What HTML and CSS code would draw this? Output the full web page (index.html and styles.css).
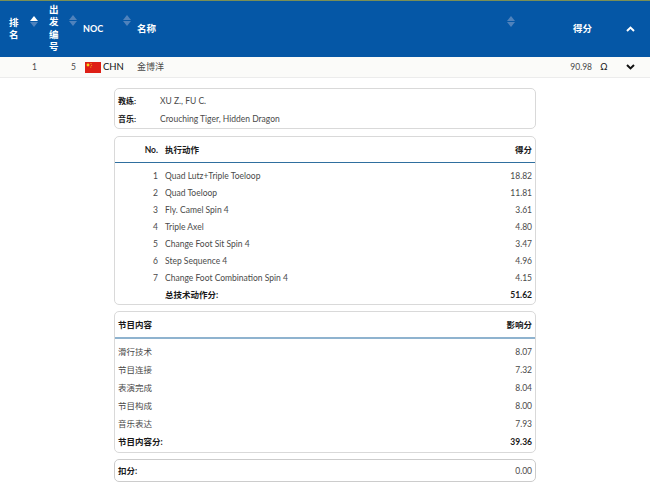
FILE: index.html
```html
<!DOCTYPE html>
<html lang="zh">
<head>
<meta charset="utf-8">
<title>Results</title>
<link rel="stylesheet" href="styles.css">
</head>
<body>
<div class="head">
  <div class="hc c-rank"><span class="hl">排名</span><span class="sort up"></span></div>
  <div class="hc c-start"><span class="hl">出发编号</span><span class="sort"></span></div>
  <div class="hc c-noc"><span class="hl latin">NOC</span><span class="sort"></span></div>
  <div class="hc c-name"><span class="hl">名称</span><span class="sort"></span></div>
  <div class="hc c-score"><span class="hl">得分</span></div>
  <div class="hc c-tog"><svg class="chev" width="9" height="6" viewBox="0 0 9 6"><path d="M1 5 L4.5 1.6 L8 5" fill="none" stroke="#fff" stroke-width="2"/></svg></div>
</div>
<div class="row">
  <div class="c-rank num">1</div>
  <div class="c-start num">5</div>
  <div class="c-noc noc">
    <svg class="flag" width="16" height="11" viewBox="0 0 16 11"><rect width="16" height="11" fill="#de1f16"/><circle cx="3" cy="3" r="1.4" fill="#f7d51d"/><circle cx="6" cy="1.6" r=".5" fill="#f7d51d"/><circle cx="6.6" cy="3.2" r=".5" fill="#f7d51d"/><circle cx="5.8" cy="5" r=".5" fill="#f7d51d"/></svg>
    <span>CHN</span>
  </div>
  <div class="c-name">金博洋</div>
  <div class="c-score val">90.98</div>
  <div class="c-q">Ω</div>
  <div class="c-tog"><svg class="chev" width="9" height="6" viewBox="0 0 9 6"><path d="M1 1 L4.5 4.4 L8 1" fill="none" stroke="#111" stroke-width="2"/></svg></div>
</div>
<main class="detail">
  <section class="panel info">
    <div class="info-row"><b>教练:</b><span>XU Z., FU C.</span></div>
    <div class="info-row"><b>音乐:</b><span>Crouching Tiger, Hidden Dragon</span></div>
  </section>
  <section class="panel tech">
    <div class="ph tech-grid"><b class="r">No.</b><b>执行动作</b><b class="r">得分</b></div>
    <div class="tbody">
      <div class="tech-grid line"><span class="r">1</span><span>Quad Lutz+Triple Toeloop</span><span class="r">18.82</span></div>
      <div class="tech-grid line"><span class="r">2</span><span>Quad Toeloop</span><span class="r">11.81</span></div>
      <div class="tech-grid line"><span class="r">3</span><span>Fly. Camel Spin 4</span><span class="r">3.61</span></div>
      <div class="tech-grid line"><span class="r">4</span><span>Triple Axel</span><span class="r">4.80</span></div>
      <div class="tech-grid line"><span class="r">5</span><span>Change Foot Sit Spin 4</span><span class="r">3.47</span></div>
      <div class="tech-grid line"><span class="r">6</span><span>Step Sequence 4</span><span class="r">4.96</span></div>
      <div class="tech-grid line"><span class="r">7</span><span>Change Foot Combination Spin 4</span><span class="r">4.15</span></div>
      <div class="tech-grid line"><span></span><b>总技术动作分:</b><b class="r">51.62</b></div>
    </div>
  </section>
  <section class="panel pcs">
    <div class="ph split"><b>节目内容</b><b>影响分</b></div>
    <div class="tbody">
      <div class="split pline"><span>滑行技术</span><span>8.07</span></div>
      <div class="split pline"><span>节目连接</span><span>7.32</span></div>
      <div class="split pline"><span>表演完成</span><span>8.04</span></div>
      <div class="split pline"><span>节目构成</span><span>8.00</span></div>
      <div class="split pline"><span>音乐表达</span><span>7.93</span></div>
      <div class="split pline"><b>节目内容分:</b><b>39.36</b></div>
    </div>
  </section>
  <section class="panel ded split"><b>扣分:</b><span>0.00</span></section>
</main>
</body>
</html>
```
FILE: styles.css
```css
* { box-sizing: border-box; }
html, body { margin: 0; padding: 0; }
body {
  background: #fff;
  color: #4a4a4a;
  font: 8.5px/12px Lato, "Noto Sans CJK SC", sans-serif;
  height: 492px;
  overflow: hidden;
}
b { color: #1a1a1a; font-weight: 700; }

.head, .row { display: grid; align-items: center; }
.head {
  grid-template-columns: 40px 41px 51px 414px 46px 58px;
  height: 57px;
  background: #0557a6;
  border-top: 1px solid #7a8f55;
  color: #fff;
  font-weight: 700;
  font-size: 9.5px;
}
.hc { display: flex; align-items: center; height: 100%; }
.hl { display: block; line-height: 12.5px; }
.c-rank.hc { padding-left: 9px; }
.c-rank.hc .hl { width: 10px; }
.c-rank.hc .sort { margin-left: 11px; margin-top: -16px; }
.c-start.hc { padding-left: 9px; }
.c-start.hc .hl { width: 10px; margin-top: -1px; }
.c-start.hc .sort { margin-left: 10px; margin-top: -17px; }
.c-noc.hc { padding-left: 2px; }
.latin { font-size: 9px; }
.c-noc.hc .sort { margin-left: 20px; margin-top: -17px; }
.c-name.hc { padding-left: 5px; }
.c-name.hc .sort { margin-left: 351px; margin-top: -16px; }
.c-score.hc { justify-content: flex-end; }
.c-tog { display: flex; justify-content: flex-end; align-items: center; padding-right: 15px; }

.sort { position: relative; display: block; width: 8px; height: 11px; flex: none; }
.sort::before, .sort::after {
  content: "";
  position: absolute;
  left: 0;
  border-left: 4px solid transparent;
  border-right: 4px solid transparent;
}
.sort::before { top: 0; border-bottom: 5px solid #4f82bc; }
.sort::after { bottom: 0; border-top: 5px solid #4f82bc; }
.sort.up::before { border-bottom-color: #fff; }

.row {
  grid-template-columns: 37px 39px 56px 414px 46px 24px 34px;
  height: 21px;
  background: #fbfbf9;
  border-bottom: 1px solid #ececec;
}
.num { text-align: right; }
.noc { display: flex; align-items: center; color: #111; padding-left: 9px; font-size: 9.5px; gap: 2px; }
.flag { display: block; flex: none; }
.row .c-name { padding-left: 5px; font-size: 9px; }
.val { text-align: right; }
.c-q { text-align: center; color: #111; font-size: 9px; }

.detail { width: 422px; margin: 10px 0 0 114px; display: flex; flex-direction: column; }
.panel { border: 1px solid #d9d9d9; border-radius: 5px; background: #fff; }
.info { height: 41px; padding: 3px 3px 0; margin-bottom: 7px; }
.info-row { display: grid; grid-template-columns: 42px 1fr; height: 18px; align-items: center; }
.info-row b { font-size: 8px; }

.tech { height: 169px; margin-bottom: 6px; }
.tech-grid { display: grid; grid-template-columns: 43px 1fr 30px; column-gap: 7px; padding-right: 3px; align-items: center; }
.split { display: flex; justify-content: space-between; align-items: center; padding: 0 3px; }
.r { text-align: right; }
.ph { height: 26px; border-bottom: 1px solid #2f6f9f; }
.tbody { padding-top: 4px; }
.line { height: 17px; }
.pcs { height: 142px; margin-bottom: 6px; }
.pcs .ph { border-bottom: 2px solid #8fb3cf; height: 27px; }
.pcs .tbody { padding-top: 4px; }
.pline { height: 18px; }
.ded { height: 23px; border-color: #ccc; }
```
